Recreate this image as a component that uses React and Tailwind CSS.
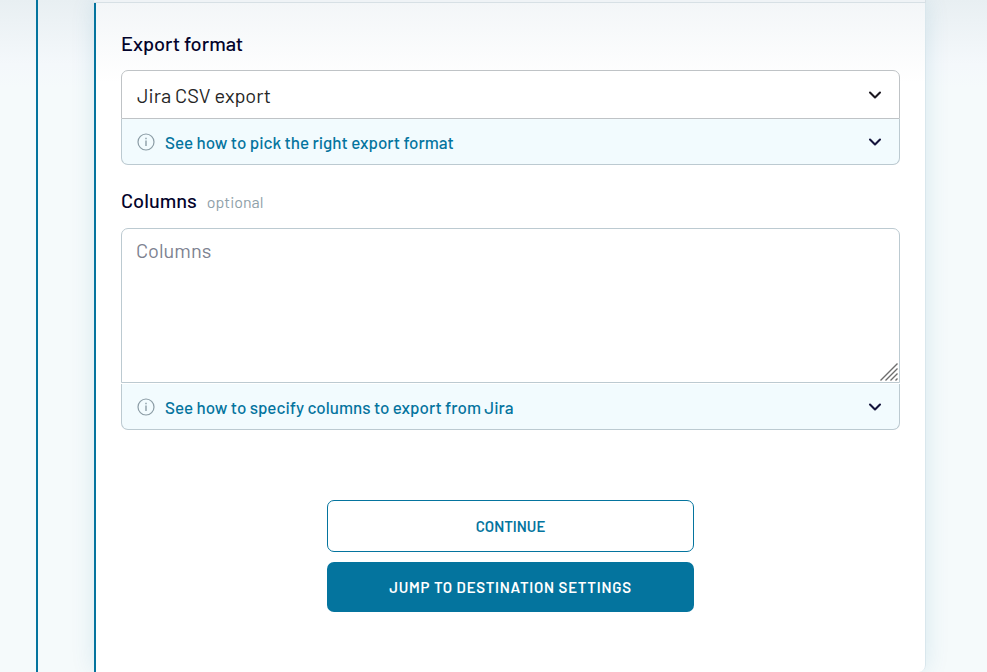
import React from 'react';
import { ChevronDown } from 'lucide-react';

const exportFormats = ['Jira CSV export', 'Jira JSON export', 'Jira table export'];

function InfoIcon() {
  return (
    <svg
      className="h-[18px] w-[18px] shrink-0 text-[#8b9ca5]"
      viewBox="0 0 18 18"
      fill="none"
      stroke="currentColor"
      aria-hidden="true"
    >
      <circle cx="9" cy="9" r="8" strokeWidth="1.2" />
      <path d="M9 7.6v5.4" strokeWidth="1.4" />
      <path d="M9 4.8v1.4" strokeWidth="1.4" />
    </svg>
  );
}

function HelpToggle({ children }) {
  return (
    <button
      type="button"
      aria-expanded="false"
      className="flex h-[46px] w-full items-center rounded-b-[7px] border-x border-b border-[#bccad1] bg-[#f2fbfe] pr-[14px] pl-[15px] text-left text-[17px] font-medium text-[#04749e]"
    >
      <InfoIcon />
      <span className="ml-[10px] flex-1 pt-0.5">{children}</span>
      <ChevronDown className="h-5 w-5 text-[#14143c]" strokeWidth={2.5} />
    </button>
  );
}

export default function App() {
  return (
    <main className="min-h-screen bg-[#f5fafb] bg-[linear-gradient(to_bottom,#e8eff2,#f4f8fb_64px,#f5fafb_88px)] pr-[61px] pl-9 font-['Barlow','Roboto',sans-serif] text-[#03032b]">
      <div className="min-h-screen border-l-2 border-[#04749e] pl-14">
        <section className="rounded-b-[7px] bg-white shadow-[0_0_24px_rgba(4,116,158,0.12)]">
          <div className="h-[3px] border-r border-b border-[#d7e0e5] bg-[#eff3f6]"></div>

          <form
            className="rounded-br-[7px] border-r border-l-2 border-r-[#d9e7ed] border-l-[#04749e] bg-[linear-gradient(to_bottom,#f3f6f8,#ffffff_80px)] px-[25px] pt-7 pb-[60px]"
            onSubmit={(e) => e.preventDefault()}
          >
            <label htmlFor="format" className="block text-xl leading-6 font-medium">
              Export format
            </label>
            <div className="relative mt-[15px]">
              <select
                id="format"
                className="block h-[49px] w-full appearance-none rounded-t-[7px] border border-[#bfc3c6] bg-white px-[15px] pt-px text-xl text-[#252525] outline-none"
              >
                {exportFormats.map((format) => (
                  <option key={format}>{format}</option>
                ))}
              </select>
              <ChevronDown
                className="pointer-events-none absolute top-[15px] right-[15px] h-5 w-5 text-[#1c1820]"
                strokeWidth={2.5}
              />
            </div>
            <HelpToggle>See how to pick the right export format</HelpToggle>

            <div className="mt-[23px] flex items-baseline">
              <label htmlFor="columns" className="text-xl leading-6 font-medium">
                Columns
              </label>
              <span className="ml-[10px] text-base leading-6 text-[#8fa1a9]">optional</span>
            </div>
            <div className="relative mt-[14px]">
              <textarea
                id="columns"
                placeholder="Columns"
                className="block h-[155px] w-full resize-none rounded-t-[7px] border border-[#bccad1] bg-white px-[14px] py-[9px] text-xl leading-6 outline-none placeholder:text-[#7d8290]"
              />
              <svg
                className="pointer-events-none absolute right-[2px] bottom-[2px] h-[18px] w-[18px]"
                viewBox="0 0 18 18"
                stroke="#6e6e6e"
                strokeWidth="1.4"
                aria-hidden="true"
              >
                <path d="M0.5 17.5l17-17M5.5 17.5l12-12M10.5 17.5l7-7M15.5 17.5l2-2" />
              </svg>
            </div>
            <div className="mt-px">
              <HelpToggle>See how to specify columns to export from Jira</HelpToggle>
            </div>

            <div className="mx-auto mt-[70px] flex max-w-[367px] flex-col gap-[10px]">
              <button
                type="submit"
                className="h-[52px] rounded-[7px] border border-[#04749e] bg-white text-[15px] font-semibold text-[#04749e] uppercase"
              >
                Continue
              </button>
              <button
                type="button"
                className="h-[50px] rounded-[7px] bg-[#04749e] text-[15px] font-semibold tracking-wider text-white uppercase"
              >
                Jump to destination settings
              </button>
            </div>
          </form>
        </section>
      </div>
    </main>
  );
}
